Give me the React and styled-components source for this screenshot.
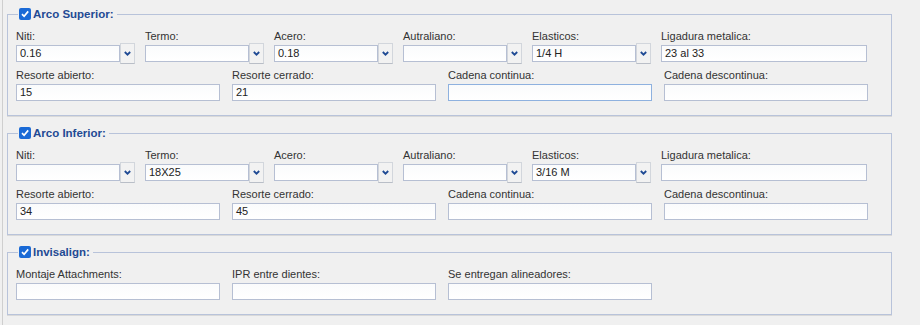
import React from 'react';
import styled, { createGlobalStyle } from 'styled-components';

const GlobalStyle = createGlobalStyle`
  html, body {
    margin: 0;
    padding: 0;
    background: #f0f0f0;
  }
  body {
    font-family: 'Liberation Sans', Arial, sans-serif;
    font-size: 11px;
    color: #222;
  }
`;

const Page = styled.div`
  width: 918px;
  height: 325px;
  margin-left: 2px;
  border-left: 1px solid #cfcfcf;
  padding: 7px 0 0 4px;
  box-sizing: border-box;
  display: flex;
  flex-direction: column;
  gap: 10px;
`;

const Group = styled.fieldset`
  width: 885px;
  box-sizing: border-box;
  margin: 0;
  padding: 8px 8px 14px 8px;
  border: 1px solid #b8c3da;
  box-shadow: 0 1px 0 #d9d9d9;
  display: flex;
  flex-direction: column;
  gap: 6px;
`;

const Legend = styled.legend`
  display: flex;
  align-items: center;
  gap: 2px;
  padding: 0 3px 0 1px;
  margin-left: 2px;
  height: 14px;
  font-weight: bold;
  font-size: 11.5px;
  color: #1f4a94;
`;

const Check = styled.span`
  width: 12px;
  height: 12px;
  border-radius: 2px;
  background: #1a6ad6;
  display: inline-flex;
  align-items: center;
  justify-content: center;
`;

const Row = styled.div`
  display: grid;
  grid-template-columns: ${p => p.$cols};
  column-gap: ${p => p.$gap}px;
`;

const Field = styled.div`
  display: flex;
  flex-direction: column;
  gap: 2px;
`;

const Label = styled.label`
  height: 14px;
  line-height: 14px;
  color: #333;
  white-space: nowrap;
`;

const Input = styled.div`
  height: 17px;
  flex: ${p => (p.$grow ? '1 1 auto' : '0 0 auto')};
  box-sizing: border-box;
  border: 1px solid ${p => (p.$focus ? '#8eb1df' : '#b6bfd3')};
  background: linear-gradient(#fafbfc, #ffffff);
  padding: 0 3px;
  line-height: 15px;
  color: #222;
`;

const SelectWrap = styled.div`
  display: flex;
  align-items: center;
  height: 17px;
`;

const DropBtn = styled.div`
  width: 15px;
  height: 21px;
  flex: none;
  box-sizing: border-box;
  border: 1px solid #d2d6dc;
  border-bottom-color: #b9bec7;
  background: #f2f2f2;
  display: flex;
  align-items: center;
  justify-content: center;
`;

const Chevron = () => (
  <svg width="7" height="5" viewBox="0 0 7 5">
    <path d="M0.8 1 L3.5 3.7 L6.2 1" fill="none" stroke="#1f4a94" strokeWidth="1.8" />
  </svg>
);

const CheckMark = () => (
  <svg width="10" height="10" viewBox="0 0 10 10">
    <path d="M2 5.2 L4.1 7.3 L8.2 2.4" fill="none" stroke="#fff" strokeWidth="1.7" />
  </svg>
);

const SelectField = ({ label, value }) => (
  <Field>
    <Label>{label}</Label>
    <SelectWrap>
      <Input $grow>{value}</Input>
      <DropBtn><Chevron /></DropBtn>
    </SelectWrap>
  </Field>
);

const TextField = ({ label, value, focus }) => (
  <Field>
    <Label>{label}</Label>
    <Input $focus={focus}>{value}</Input>
  </Field>
);

const SIX = 'repeat(5, 119px) 206px';
const FOUR = 'repeat(4, 204px)';

const arch = (sel, texts) => (
  <>
    <Row $cols={SIX} $gap={10}>
      <SelectField label="Niti:" value={sel.niti} />
      <SelectField label="Termo:" value={sel.termo} />
      <SelectField label="Acero:" value={sel.acero} />
      <SelectField label="Autraliano:" value={sel.aus} />
      <SelectField label="Elasticos:" value={sel.elas} />
      <TextField label="Ligadura metalica:" value={sel.lig} />
    </Row>
    <Row $cols={FOUR} $gap={12}>
      <TextField label="Resorte abierto:" value={texts.abierto} />
      <TextField label="Resorte cerrado:" value={texts.cerrado} />
      <TextField label="Cadena continua:" value="" focus={texts.focus} />
      <TextField label="Cadena descontinua:" value="" />
    </Row>
  </>
);

export default function App() {
  return (
    <Page>
      <GlobalStyle />
      <Group>
        <Legend><Check><CheckMark /></Check>Arco Superior:</Legend>
        {arch(
          { niti: '0.16', termo: '', acero: '0.18', aus: '', elas: '1/4 H', lig: '23 al 33' },
          { abierto: '15', cerrado: '21', focus: true }
        )}
      </Group>
      <Group>
        <Legend><Check><CheckMark /></Check>Arco Inferior:</Legend>
        {arch(
          { niti: '', termo: '18X25', acero: '', aus: '', elas: '3/16 M', lig: '' },
          { abierto: '34', cerrado: '45' }
        )}
      </Group>
      <Group>
        <Legend><Check><CheckMark /></Check>Invisalign:</Legend>
        <Row $cols={FOUR} $gap={12}>
          <TextField label="Montaje Attachments:" value="" />
          <TextField label="IPR entre dientes:" value="" />
          <TextField label="Se entregan alineadores:" value="" />
        </Row>
      </Group>
    </Page>
  );
}
